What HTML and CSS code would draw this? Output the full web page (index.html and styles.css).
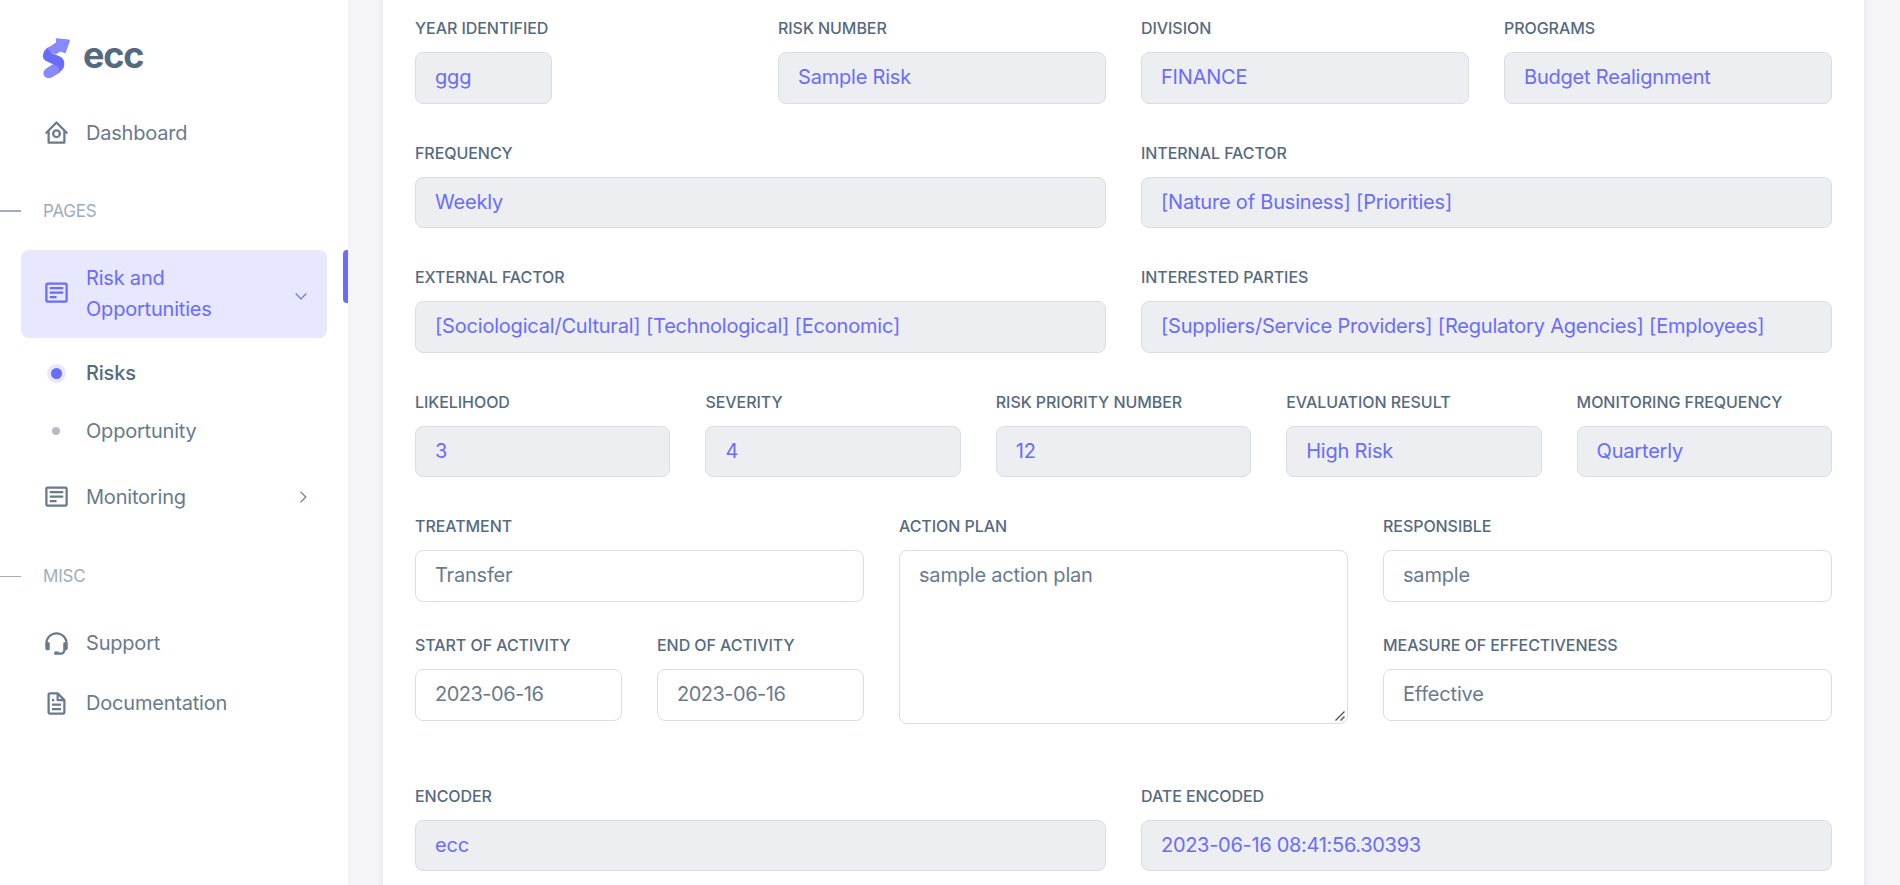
FILE: index.html
```html
<!DOCTYPE html>
<html lang="en">
<head>
<meta charset="utf-8">
<title>Risks</title>
<link rel="stylesheet" href="styles.css">
</head>
<body>
<div class="layout">
  <aside class="sidebar">
    <div class="brand">
      <svg class="brand-mark" viewBox="0 0 27 40" width="27" height="40"><path fill="#8789ff" d="M13.5.2 25.8 1.6Q27.3 1.8 26.8 3.2L22.8 14.4Q22.3 15.6 21.2 15L17.5 13.6 13 16.3 6 14 5.5 9.5 13 4.5 12.8 1Q12.8.1 13.5.2Z"/><path fill="#8789ff" d="M10 26 2.6 30.9Q-.2 33 .6 36.500 Q2.2 41.5 8.500 39.6L17 34.500 17 28Z"/><path fill="#696cff" d="M6 8.8Q-.3 12.500 0 18.5 0 21.500 4 23.500L14 28Q17.500 30 15.500 34.800L18.500 32.500Q21.300 30 21.300 26.500 21.600 21 17 18.600L8.500 15Q4.500 12.500 6 8.800Z"/></svg>
      <span class="brand-name">ecc</span>
    </div>
    <nav class="menu">
      <a class="item home"><svg class="icon" viewBox="0 0 24 24"><g fill="none" stroke="currentColor" stroke-width="2" stroke-linejoin="round" stroke-linecap="round"><path d="M3 12.300 12 3.100l9 9.200"/><path d="M5 11.500V21h14v-9.500"/><circle cx="12" cy="13" r="3"/></g></svg><span>Dashboard</span></a>
      <div class="heading first">PAGES</div>
      <a class="item active"><svg class="icon" viewBox="0 0 24 24"><path d="M20 3H4c-1.103 0-2 .897-2 2v14c0 1.103.897 2 2 2h16c1.103 0 2-.897 2-2V5c0-1.103-.897-2-2-2zM4 19V5h16l.002 14H4z"/><path d="M6 7h12v2H6zm0 4h12v2H6zm0 4h6v2H6z"/></svg><span class="wrap">Risk and Opportunities</span><svg class="chevron down" viewBox="0 0 12 12"><path d="M.7 3.500 6 8.800l5.300-5.300"/></svg></a>
      <a class="item sub current"><i class="dot"></i><span>Risks</span></a>
      <a class="item sub"><i class="dot"></i><span>Opportunity</span></a>
      <a class="item monitoring"><svg class="icon" viewBox="0 0 24 24"><path d="M20 3H4c-1.103 0-2 .897-2 2v14c0 1.103.897 2 2 2h16c1.103 0 2-.897 2-2V5c0-1.103-.897-2-2-2zM4 19V5h16l.002 14H4z"/><path d="M6 7h12v2H6zm0 4h12v2H6zm0 4h6v2H6z"/></svg><span>Monitoring</span><svg class="chevron" viewBox="0 0 12 12"><path d="M5.500.7 10.800 6l-5.300 5.300"/></svg></a>
      <div class="heading thin">MISC</div>
      <a class="item support"><svg class="icon" viewBox="0 0 24 24"><path d="M12 2C6.486 2 2 6.486 2 12v4.143C2 17.167 2.897 18 4 18h1a1 1 0 0 0 1-1v-5.143a1 1 0 0 0-1-1h-.908C4.648 6.987 7.978 4 12 4s7.352 2.987 7.908 6.857H19a1 1 0 0 0-1 1V18c0 1.103-.897 2-2 2h-2v-1h-4v3h6c2.206 0 4-1.794 4-4 1.103 0 2-.833 2-1.857V12c0-5.514-4.486-10-10-10z"/></svg><span>Support</span></a>
      <a class="item"><svg class="icon" viewBox="0 0 24 24"><path d="M19.903 8.586a.997.997 0 0 0-.196-.293l-6-6a.997.997 0 0 0-.293-.196c-.03-.014-.062-.022-.094-.033a.991.991 0 0 0-.259-.051C13.04 2.011 13.021 2 13 2H6c-1.103 0-2 .897-2 2v16c0 1.103.897 2 2 2h12c1.103 0 2-.897 2-2V9c0-.021-.011-.04-.013-.062a.952.952 0 0 0-.051-.259c-.01-.032-.019-.063-.033-.093zM16.586 8H14V5.414L16.586 8zM6 20V4h6v5a1 1 0 0 0 1 1h5l.002 10H6z"/><path d="M8 12h8v2H8zm0 4h8v2H8zm0-8h2v2H8z"/></svg><span>Documentation</span></a>
    </nav>
  </aside>
  <main class="content">
    <form class="card">
      <div class="row cols-4">
        <label class="field short"><span class="label">YEAR IDENTIFIED</span><span class="control disabled">ggg</span></label>
        <label class="field"><span class="label">RISK NUMBER</span><span class="control disabled">Sample Risk</span></label>
        <label class="field"><span class="label">DIVISION</span><span class="control disabled">FINANCE</span></label>
        <label class="field"><span class="label">PROGRAMS</span><span class="control disabled">Budget Realignment</span></label>
      </div>
      <div class="row cols-2">
        <label class="field"><span class="label">FREQUENCY</span><span class="control disabled">Weekly</span></label>
        <label class="field"><span class="label">INTERNAL FACTOR</span><span class="control disabled">[Nature of Business] [Priorities]</span></label>
      </div>
      <div class="row cols-2">
        <label class="field"><span class="label">EXTERNAL FACTOR</span><span class="control disabled">[Sociological/Cultural] [Technological] [Economic]</span></label>
        <label class="field"><span class="label">INTERESTED PARTIES</span><span class="control disabled">[Suppliers/Service Providers] [Regulatory Agencies] [Employees]</span></label>
      </div>
      <div class="row cols-5">
        <label class="field"><span class="label">LIKELIHOOD</span><span class="control disabled">3</span></label>
        <label class="field"><span class="label">SEVERITY</span><span class="control disabled">4</span></label>
        <label class="field"><span class="label">RISK PRIORITY NUMBER</span><span class="control disabled">12</span></label>
        <label class="field"><span class="label">EVALUATION RESULT</span><span class="control disabled">High Risk</span></label>
        <label class="field"><span class="label">MONITORING FREQUENCY</span><span class="control disabled">Quarterly</span></label>
      </div>
      <div class="row cols-3">
        <div class="stack">
          <label class="field"><span class="label">TREATMENT</span><span class="control">Transfer</span></label>
          <div class="row cols-2">
            <label class="field"><span class="label">START OF ACTIVITY</span><span class="control date">2023-06-16</span></label>
            <label class="field"><span class="label">END OF ACTIVITY</span><span class="control date">2023-06-16</span></label>
          </div>
        </div>
        <label class="field"><span class="label">ACTION PLAN</span><span class="control area">sample action plan<svg class="grip" viewBox="0 0 10 10"><path d="M.5 9.500l9-9M5.500 9.500l4-4"/></svg></span></label>
        <div class="stack">
          <label class="field"><span class="label">RESPONSIBLE</span><span class="control">sample</span></label>
          <label class="field"><span class="label">MEASURE OF EFFECTIVENESS</span><span class="control">Effective</span></label>
        </div>
      </div>
      <div class="row cols-2 encoded">
        <label class="field"><span class="label">ENCODER</span><span class="control disabled">ecc</span></label>
        <label class="field"><span class="label">DATE ENCODED</span><span class="control disabled timestamp">2023-06-16 08:41:56.30393</span></label>
      </div>
    </form>
  </main>
</div>
</body>
</html>
```
FILE: styles.css
```css
* { box-sizing: border-box; }
body { margin: 0; background: #f5f5f9; color: #697a8d; font: 20px/31px Inter, "Liberation Sans", sans-serif; letter-spacing: -0.2px; overflow: hidden; }
.layout { display: flex; height: 885px; overflow: hidden; }

.sidebar { width: 348px; flex: none; background: #fff; }
.brand { display: flex; align-items: center; height: 58px; margin: 29px 0 0 43px; }
.brand-mark { flex: none; }
.brand-name { margin-left: 13px; font-size: 36px; font-weight: 700; letter-spacing: -1.200px; color: #566a7f; line-height: 40px; padding-bottom: 7px; }
.menu { display: flex; flex-direction: column; padding-top: 20px; }
.item { display: flex; align-items: center; height: 52px; margin: 0 21px 8px; padding: 0 20px 0 22px; color: #697a8d; position: relative; }
.icon { width: 27px; height: 27px; flex: none; margin-right: 16px; fill: currentColor; }
.home .icon, .monitoring .icon { margin-bottom: 2px; }
.wrap { width: 160px; }
.heading { display: flex; align-items: center; height: 20px; font-size: 17px; line-height: 20px; color: #a1acb8; letter-spacing: -0.200px; }
.heading::before { content: ""; width: 21px; height: 2px; margin-right: 22px; background: #a1acb8; }
.heading.first { margin: 34px 0 29px; }
.heading.thin { margin: 35px 0 31px; }
.heading.thin::before { height: 1px; }
.active { height: 88px; border-radius: 8px; background: #e7e7ff; color: #696cff; }
.active .icon { margin-bottom: 4px; }
.active::after { content: ""; position: absolute; right: -21px; top: 0; width: 5px; height: 53px; border-radius: 4px 0 0 4px; background: #696cff; }
.chevron { width: 12px; height: 12px; margin-left: auto; fill: none; stroke: currentColor; stroke-width: 1.200; }
.down { margin-top: 4px; }
.sub { margin-bottom: 6px; }
.dot { flex: none; width: 8px; height: 8px; margin: 0 26px 0 9px; border-radius: 50%; background: #b4bdc6; }
.current { margin-top: 1px; color: #566a7f; font-weight: 500; }
.current .dot { width: 19px; height: 19px; margin: 0 20px 0 4px; background: #696cff; border: 4px solid #e7e7ff; }
.monitoring { margin-top: 8px; margin-bottom: 8px; }

.content { flex: 1; padding: 0 36px 0 35px; }
.card { height: 940px; margin-top: -20px; padding: 38.200px 32px 0; background: #fff; box-shadow: 0 3px 8px rgba(67, 89, 113, .12); display: flex; flex-direction: column; gap: 38.700px; }
.row { display: grid; column-gap: 35px; align-items: start; }
.cols-2 { grid-template-columns: repeat(2, minmax(0, 1fr)); }
.cols-3 { grid-template-columns: repeat(3, minmax(0, 1fr)); }
.cols-4 { grid-template-columns: repeat(4, minmax(0, 1fr)); }
.cols-5 { grid-template-columns: repeat(5, minmax(0, 1fr)); }
.stack { display: flex; flex-direction: column; gap: 33px; }
.field { display: flex; flex-direction: column; }
.short { width: 137px; }
.label { height: 20px; margin-bottom: 14.200px; font-size: 16px; line-height: 20px; font-weight: 500; letter-spacing: -0.060px; color: #566a7f; white-space: nowrap; }
.control { display: block; height: 51.600px; padding: 9px 19px; border: 1px solid #d9dee3; border-radius: 8px; background: #fff; color: #697a8d; white-space: nowrap; }
.disabled { background: #eceef1; color: #696cff; }
.date { letter-spacing: -0.500px; }
.timestamp { letter-spacing: -0.300px; }
.area { position: relative; height: 173.700px; }
.grip { position: absolute; right: 2px; bottom: 2px; width: 10px; height: 10px; fill: none; stroke: #555; stroke-width: 1.400; }
.encoded { margin-top: 23px; }
```
